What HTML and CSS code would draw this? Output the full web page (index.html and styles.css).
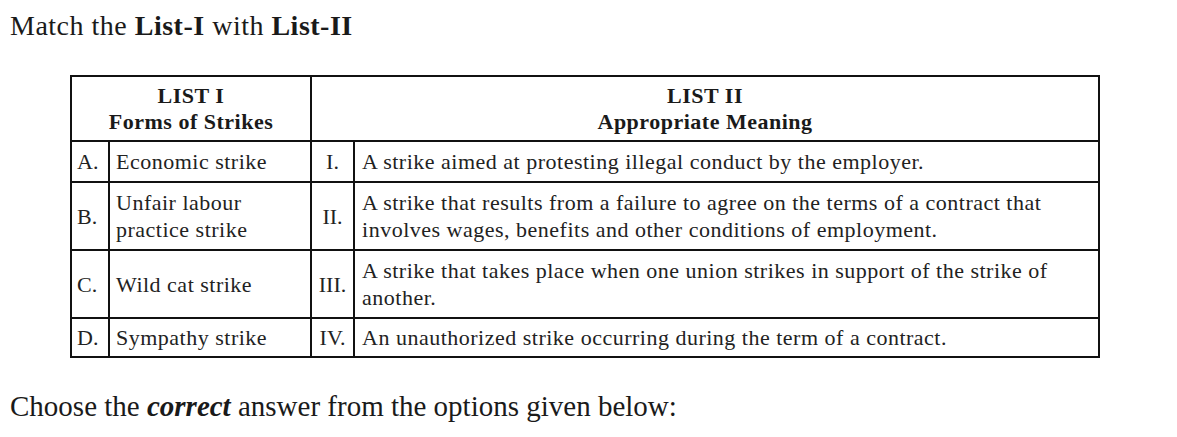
FILE: index.html
```html
<!DOCTYPE html>
<html>
<head>
<meta charset="utf-8">
<link rel="stylesheet" href="styles.css">
</head>
<body>
<p class="title">Match the <b>List-I</b> with <b>List-II</b></p>
<table class="match">
  <colgroup>
    <col class="c1"><col class="c2"><col class="c3"><col class="c4">
  </colgroup>
  <tr class="head">
    <th colspan="2">LIST I<br>Forms of Strikes</th>
    <th colspan="2">LIST II<br>Appropriate Meaning</th>
  </tr>
  <tr class="r-a">
    <td class="letter">A.</td>
    <td class="item">Economic strike</td>
    <td class="roman">I.</td>
    <td class="desc">A strike aimed at protesting illegal conduct by the employer.</td>
  </tr>
  <tr class="r-b">
    <td class="letter">B.</td>
    <td class="item">Unfair labour<br>practice strike</td>
    <td class="roman">II.</td>
    <td class="desc">A strike that results from a failure to agree on the terms of a contract that<br>involves wages, benefits and other conditions of employment.</td>
  </tr>
  <tr class="r-c">
    <td class="letter">C.</td>
    <td class="item">Wild cat strike</td>
    <td class="roman">III.</td>
    <td class="desc">A strike that takes place when one union strikes in support of the strike of<br>another.</td>
  </tr>
  <tr class="r-d">
    <td class="letter">D.</td>
    <td class="item">Sympathy strike</td>
    <td class="roman">IV.</td>
    <td class="desc">An unauthorized strike occurring during the term of a contract.</td>
  </tr>
</table>
<p class="choose">Choose the <b><i>correct</i></b> answer from the options given below:</p>
</body>
</html>
```
FILE: styles.css
```css
html, body {
  margin: 0;
  padding: 0;
  background: #fff;
}
body {
  font-family: "Liberation Serif", "Times New Roman", serif;
  color: #1a1a1a;
}
.title {
  margin: 0;
  padding: 11px 0 0 10px;
  font-size: 28px;
  line-height: 30px;
  letter-spacing: 0.5px;
}
.match {
  margin: 34px 0 0 70px;
  border-collapse: collapse;
  table-layout: fixed;
  width: 1028px;
  font-size: 22px;
  line-height: 27px;
  letter-spacing: 0.5px;
  color: #222;
}
.c1 { width: 38px; }
.c2 { width: 202px; }
.c3 { width: 43px; }
.c4 { width: 745px; }
.match th, .match td {
  border: 2px solid #111;
  padding: 0;
  vertical-align: middle;
  white-space: nowrap;
}
.match th {
  font-weight: bold;
  text-align: center;
  height: 63px;
  line-height: 26px;
  color: #1a1a1a;
}
.r-a td { height: 39px; }
.r-b td { height: 66px; }
.r-c td { height: 66px; }
.r-d td { height: 37px; }
.letter { padding-left: 5px !important; letter-spacing: 0; }
.item { padding-left: 6px !important; }
.roman { text-align: center; letter-spacing: 0; }
.desc { padding-left: 7px !important; }
.choose {
  margin: 32px 0 0 10px;
  font-size: 29px;
  line-height: 32px;
  color: #1a1a1a;
}
```
